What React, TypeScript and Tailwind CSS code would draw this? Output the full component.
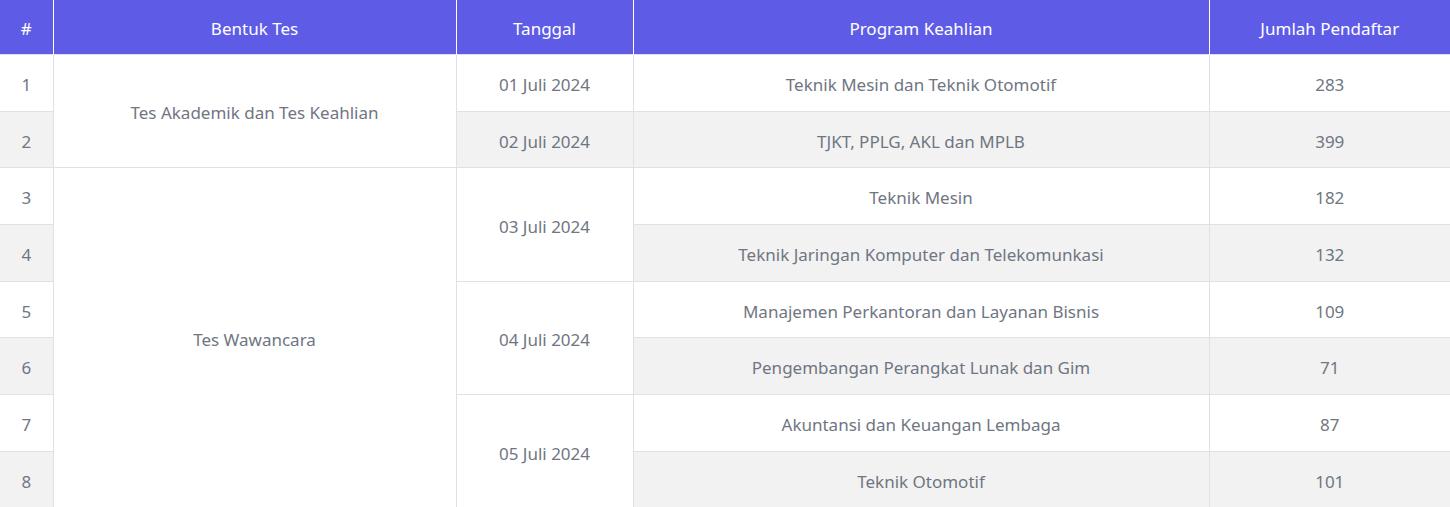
import React from 'react';

const head = ['#', 'Bentuk Tes', 'Tanggal', 'Program Keahlian', 'Jumlah Pendaftar'];

const td = 'border border-[#dee2e6] first:border-l-0 last:border-r-0 text-center align-middle px-3 pt-[5px]';

export default function App() {
    return (
        <div className="w-[1450px] bg-white font-['Noto_Sans',sans-serif] text-[17px] text-[#6f7682]">
            <table className="w-full border-collapse table-fixed">
                <colgroup>
                    <col className="w-[53px]" />
                    <col className="w-[403px]" />
                    <col className="w-[177px]" />
                    <col className="w-[576px]" />
                    <col />
                </colgroup>
                <thead>
                    <tr className="h-[54px] bg-[#5e5ce6] text-white">
                        {head.map((h, i) => (
                            <th key={i} className="font-normal text-center border-x border-white first:border-l-0 last:border-r-0 px-3 pt-[4px]">
                                {h}
                            </th>
                        ))}
                    </tr>
                </thead>
                <tbody>
                    <tr className="h-[57px] bg-white">
                        <td className={td}>1</td>
                        <td className={td + ' bg-white'} rowSpan={2}>Tes Akademik dan Tes Keahlian</td>
                        <td className={td}>01 Juli 2024</td>
                        <td className={td}>Teknik Mesin dan Teknik Otomotif</td>
                        <td className={td}>283</td>
                    </tr>
                    <tr className="h-[56px] bg-[#f2f2f2]">
                        <td className={td}>2</td>
                        <td className={td}>02 Juli 2024</td>
                        <td className={td}>TJKT, PPLG, AKL dan MPLB</td>
                        <td className={td}>399</td>
                    </tr>
                    <tr className="h-[57px] bg-white">
                        <td className={td}>3</td>
                        <td className={td + ' bg-white'} rowSpan={6}>Tes Wawancara</td>
                        <td className={td + ' bg-white'} rowSpan={2}>03 Juli 2024</td>
                        <td className={td}>Teknik Mesin</td>
                        <td className={td}>182</td>
                    </tr>
                    <tr className="h-[57px] bg-[#f2f2f2]">
                        <td className={td}>4</td>
                        <td className={td}>Teknik Jaringan Komputer dan Telekomunkasi</td>
                        <td className={td}>132</td>
                    </tr>
                    <tr className="h-[56px] bg-white">
                        <td className={td}>5</td>
                        <td className={td + ' bg-white'} rowSpan={2}>04 Juli 2024</td>
                        <td className={td}>Manajemen Perkantoran dan Layanan Bisnis</td>
                        <td className={td}>109</td>
                    </tr>
                    <tr className="h-[57px] bg-[#f2f2f2]">
                        <td className={td}>6</td>
                        <td className={td}>Pengembangan Perangkat Lunak dan Gim</td>
                        <td className={td}>71</td>
                    </tr>
                    <tr className="h-[57px] bg-white">
                        <td className={td}>7</td>
                        <td className={td + ' bg-white'} rowSpan={2}>05 Juli 2024</td>
                        <td className={td}>Akuntansi dan Keuangan Lembaga</td>
                        <td className={td}>87</td>
                    </tr>
                    <tr className="h-[57px] bg-[#f2f2f2]">
                        <td className={td}>8</td>
                        <td className={td}>Teknik Otomotif</td>
                        <td className={td}>101</td>
                    </tr>
                </tbody>
            </table>
        </div>
    );
}
